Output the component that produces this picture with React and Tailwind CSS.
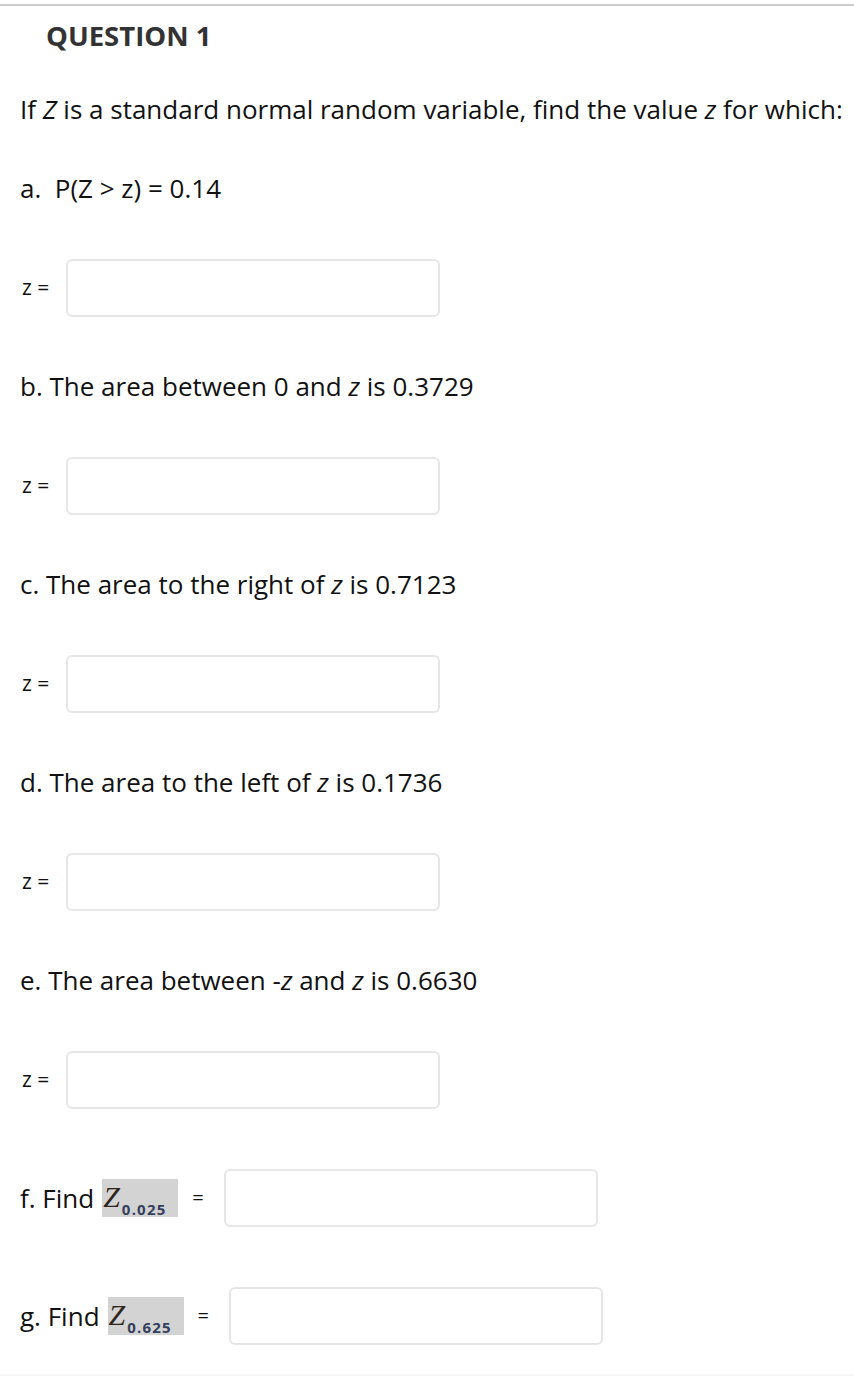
import React from "react";

const font = { fontFamily: '"Open Sans", "Liberation Sans", sans-serif' };

function ZRow() {
  return (
    <div className="flex items-center pl-[22px]">
      <span className="w-[44px] text-[21px] leading-none text-[#111]">z =</span>
      <div className="h-[58px] w-[374px] rounded-[6px] border-2 border-[#e6e6e6] bg-white" />
    </div>
  );
}

function Part({ children, first }) {
  return (
    <div className={first ? "" : "mt-[56px]"}>
      <p className="pl-[20px] text-[26px] leading-none text-[#111]">{children}</p>
      <div className="mt-[58px]">
        <ZRow />
      </div>
    </div>
  );
}

function FindRow({ label, sub, className }) {
  return (
    <div className={"flex items-center pl-[20px] " + className}>
      <span className="text-[26px] leading-none text-[#111]">{label}</span>
      <span className="ml-[8px] flex h-[38px] w-[76px] items-end bg-[#d3d3d3] pl-[1px]">
        <span
          className="mb-[5px] text-[30px] italic leading-none text-[#2e2619]"
          style={{ fontFamily: '"Liberation Serif", "DejaVu Serif", serif' }}
        >
          Z
        </span>
        <span className="ml-[2px] text-[15px] font-bold leading-none tracking-[1.2px] text-[#34405c]">
          {sub}
        </span>
      </span>
      <span className="ml-[14px] text-[20px] leading-none text-[#111]">=</span>
      <div className="ml-[20px] h-[58px] w-[374px] rounded-[6px] border-2 border-[#e6e6e6] bg-white" />
    </div>
  );
}

export default function App() {
  return (
    <div className="relative min-h-[1376px] w-[854px] bg-white" style={font}>
      <div className="pt-[4px]">
        <div className="h-[2px] w-[854px] bg-[#cccccc]" />
      </div>
      <h1 className="mt-[16px] pl-[46px] text-[27.5px] font-bold leading-none text-[#333333]">
        QUESTION 1
      </h1>
      <p className="mt-[46px] pl-[20px] text-[26px] leading-none text-[#111]">
        If <i>Z</i> is a standard normal random variable, find the value <i>z</i> for which:
      </p>
      <div className="mt-[53px]">
        <Part first>a.&nbsp; P(Z &gt; z) = 0.14</Part>
        <Part>
          b. The area between 0 and <i>z</i> is 0.3729
        </Part>
        <Part>
          c. The area to the right of <i>z</i> is 0.7123
        </Part>
        <Part>
          d. The area to the left of <i>z</i> is 0.1736
        </Part>
        <Part>
          e. The area between -<i>z</i> and <i>z</i> is 0.6630
        </Part>
      </div>
      <FindRow label="f. Find" sub="0.025" className="mt-[60px]" />
      <FindRow label="g. Find" sub="0.625" className="mt-[60px]" />
      <div className="absolute bottom-0 left-0 h-[2px] w-[854px] bg-[#f7f7f7]" />
    </div>
  );
}
